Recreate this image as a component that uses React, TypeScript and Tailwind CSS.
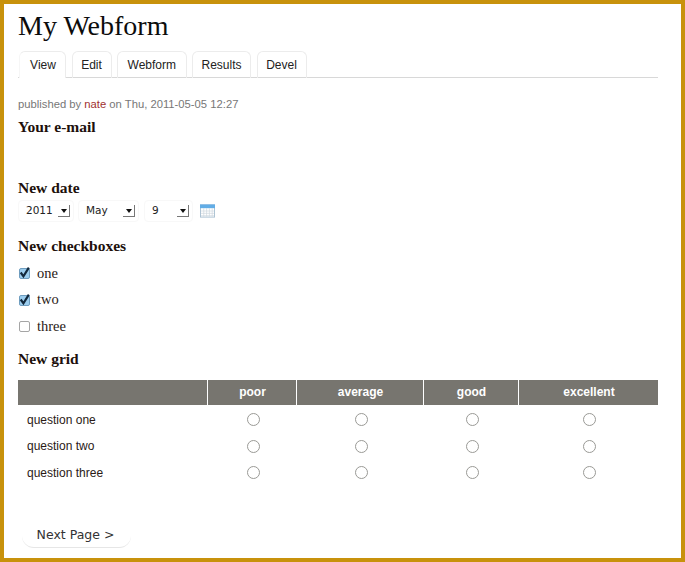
const serif = "font-['Liberation_Serif',serif]"
const sans = "font-['Liberation_Sans',Arial,sans-serif]"
const lucida = "font-['DejaVu_Sans',sans-serif]"

const tabs = [
	{ label: 'View', width: 'w-[47px]', active: true },
	{ label: 'Edit', width: 'w-[40px]' },
	{ label: 'Webform', width: 'w-[69.5px]' },
	{ label: 'Results', width: 'w-[59px]' },
	{ label: 'Devel', width: 'w-[50px]' },
]

const columns = ['poor', 'average', 'good', 'excellent']
const questions = ['question one', 'question two', 'question three']
const gridCols = 'grid-cols-[190px_89px_127px_95px_139px]'

const Heading = ({ children, className = '' }: { children: string; className?: string }) => (
	<h3 className={`${serif} text-[15.5px] font-bold leading-[18px] text-[#20100c] ${className}`}>{children}</h3>
)

const DateSelect = ({ value, width, gap }: { value: string; width: string; gap: string }) => (
	<div className={`flex h-[22px] items-center rounded-sm border border-[#f8f8f8] pr-[3px] pl-[7px] ${width} ${gap}`}>
		<span className={`${lucida} flex-1 text-[10.5px] text-[#222]`}>{value}</span>
		<span className="flex h-[12px] w-[12px] items-center justify-center border-r border-b border-[#777]">
			<span className="h-0 w-0 border-x-[3px] border-t-[4px] border-x-transparent border-t-[#111]" />
		</span>
	</div>
)

const CheckItem = ({ label, checked }: { label: string; checked?: boolean }) => (
	<label className="flex h-[26.5px] items-center gap-[7px] pl-px">
		{checked ? (
			<span className="flex h-[11px] w-[11px] items-center justify-center rounded-[2px] border border-[#6f9dbf] bg-[#9ccdee]">
				<svg viewBox="0 0 12 12" className="h-[13px] w-[13px] -translate-y-px overflow-visible">
					<path d="M2.5 6 L5 9.5 L10 1.5" fill="none" stroke="#12283c" strokeWidth="2" />
				</svg>
			</span>
		) : (
			<span className="h-[11px] w-[11px] rounded-[2px] border border-[#a5a5a5] bg-white" />
		)}
		<span className={`${serif} text-[14.5px] text-[#2a1a16]`}>{label}</span>
	</label>
)

const CalendarIcon = () => (
	<svg viewBox="0 0 16 14" className="ml-[7px] h-[14px] w-[15px]">
		<rect x="0.5" y="0.5" width="15" height="13" fill="#fff" stroke="#a9c0d2" />
		<rect x="0" y="0" width="16" height="4" fill="#62ade6" />
		<path d="M1 7h14M1 9.5h14M1 12h14M4 4v9M7 4v9M10 4v9M13 4v9" stroke="#cdd6de" strokeWidth="0.7" />
	</svg>
)

const Radio = () => <span className="mx-auto block h-[13px] w-[13px] rounded-full border-[1.5px] border-[#9a9a96] bg-white" />

export default function App() {
	return (
		<div className="h-[562px] w-[685px] border-4 border-[#c8920c] bg-white">
			<div className="pt-[7px] pr-[23px] pl-[14px]">
				<h1 className={`${serif} text-[28px] leading-[30px] text-[#0c0c0c]`}>My Webform</h1>

				<div className="mt-[10px] flex h-[27px] gap-[5.5px] border-b border-[#d8d8d8] pl-px">
					{tabs.map((tab) => (
						<div
							key={tab.label}
							className={`${sans} ${tab.width} flex h-[27px] items-center justify-center rounded-t-md border-t border-r border-[#ececec] text-[12px] text-[#222] ${tab.active ? 'border-l border-l-[#f6f6f6] bg-white pl-px' : 'border-l'}`}
						>
							{tab.label}
						</div>
					))}
				</div>

				<p className={`${sans} mt-[19px] text-[11.25px] leading-[14px] text-[#777]`}>
					published by <span className="text-[#a03030]">nate</span> on Thu, 2011-05-05 12:27
				</p>

				<Heading className="mt-[7px]">Your e-mail</Heading>

				<Heading className="mt-[43px]">New date</Heading>
				<div className="mt-[3px] flex items-center">
					<DateSelect value="2011" width="w-[56px]" gap="mr-[4px]" />
					<DateSelect value="May" width="w-[61px]" gap="mr-[5px]" />
					<DateSelect value="9" width="w-[49px]" gap="mr-0" />
					<CalendarIcon />
				</div>

				<Heading className="mt-[15px]">New checkboxes</Heading>
				<div className="mt-[5.5px]">
					<CheckItem label="one" checked />
					<CheckItem label="two" checked />
					<CheckItem label="three" />
				</div>

				<Heading className="mt-[9.5px]">New grid</Heading>

				<div className={`mt-[12px] grid w-[640px] ${gridCols}`}>
					<div className="mb-[2px] h-[25px] border-r border-white bg-[#77756f]" />
					{columns.map((col, i) => (
						<div
							key={col}
							className={`${sans} mb-[2px] flex h-[25px] items-center justify-center border-white bg-[#77756f] pl-px text-[12px] font-bold text-white ${i < columns.length - 1 ? 'border-r' : ''}`}
						>
							{col}
						</div>
					))}
					{questions.map((question) => (
						<div key={question} className="contents">
							<div className={`${sans} flex h-[26.5px] items-center pl-[9px] text-[12px] text-[#2a1a16]`}>{question}</div>
							{columns.map((col) => (
								<div key={col} className="flex h-[26.5px] items-center pl-[2px]">
									<Radio />
								</div>
							))}
						</div>
					))}
				</div>

				<button
					className={`${lucida} mt-[38px] ml-[4px] h-[24px] w-[109px] rounded-b-xl border-b border-[#e6e6e6] pr-[2px] text-[12.5px] text-[#333]`}
				>
					Next Page &gt;
				</button>
			</div>
		</div>
	)
}
